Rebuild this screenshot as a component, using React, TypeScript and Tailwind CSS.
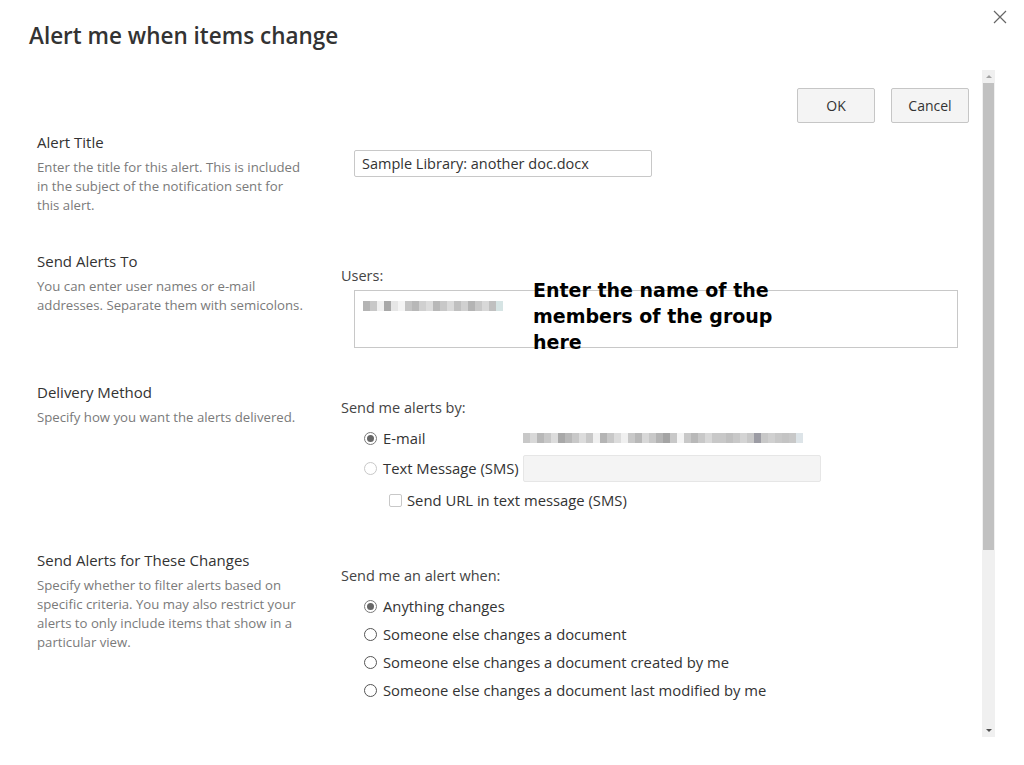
import React from "react";

const font = { fontFamily: '"Segoe UI", "Open Sans", "Liberation Sans", sans-serif' };

function Blur({ cells }: { cells: string[] }) {
  return (
    <div className="flex h-[10px] items-stretch blur-[0.5px]">
      {cells.map((c, i) => (
        <span key={i} className="w-[7px]" style={{ background: c }} />
      ))}
    </div>
  );
}

function Radio({ checked, disabled }: { checked?: boolean; disabled?: boolean }) {
  return (
    <span
      className={`flex h-[13px] w-[13px] shrink-0 items-center justify-center rounded-full border bg-white ${
        disabled ? "border-[#c8c8c8]" : checked ? "border-[#7a7a7a]" : "border-[#555]"
      }`}
    >
      {checked && <span className="h-[7px] w-[7px] rounded-full bg-[#666]" />}
    </span>
  );
}

function Section({
  title,
  desc,
  height,
  children,
}: {
  title: string;
  desc: React.ReactNode;
  height: string;
  children: React.ReactNode;
}) {
  return (
    <div className={`flex ${height}`}>
      <div className="w-[341px] shrink-0 pl-[37px] pr-[38px]">
        <div className="text-[15px] leading-[20px] text-[#333]">{title}</div>
        <div className="mt-[6px] text-[13.2px] leading-[19px] text-[#7a7a7a]">{desc}</div>
      </div>
      <div className="flex-1">{children}</div>
    </div>
  );
}

const userCells = [
  "#b4b4b4", "#c8c8c8", "#f0f0f0", "#a8a8a8", "#e6e6e6", "#f4f4f4", "#c4c4c4", "#b8b8b8", "#d0d0d0", "#dcdcdc",
  "#b8b8b8", "#c8c8c8", "#dadada", "#c0c0c0", "#d0d0d0", "#b4b4b4", "#c8c8c8", "#d8d8d8", "#c0c0c0", "#d6e4e4",
];
const mailCells = [
  "#c8c8c8", "#d8d8d8", "#b8b8b8", "#c8c8c8", "#dcdcdc", "#a8a8a8", "#b8b8b8", "#c8c8c8", "#dcdcdc", "#c8c8c8",
  "#f0f0f0", "#b4b4b4", "#c8c8c8", "#dcdcdc", "#f0f0f0", "#c8c8c8", "#b8b8b8", "#d8d8d8", "#c8c8c8", "#b4b4b4",
  "#a4a4a4", "#c8c8c8", "#f4f4f4", "#c8c8c8", "#b8b8b8", "#c8c8c8", "#d8d8d8", "#c8c8c8", "#c8c8c8", "#c0c0c0",
  "#c8c8c8", "#d4d4d4", "#c8c8c8", "#9c9ca4", "#c8c8c8", "#d0d0d0", "#c8c8c8", "#c4c4c4", "#c8c8c8", "#dde4e8",
];

export default function App() {
  return (
    <div className="relative flex h-[765px] w-[1024px] flex-col overflow-hidden bg-white" style={font}>
      {/* Header */}
      <div className="flex h-[70px] shrink-0 items-start justify-between">
        <h1 className="pl-[29px] pt-[21px] text-[22.5px] font-semibold leading-[30px] text-[#333]">
          Alert me when items change
        </h1>
        <button className="mr-[17px] mt-[10px] flex h-[14px] w-[14px] items-center justify-center">
          <svg width="14" height="14" viewBox="0 0 14 14" fill="none" stroke="#666" strokeWidth="1.2">
            <path d="M1 1l12 12M13 1L1 13" />
          </svg>
        </button>
      </div>

      {/* Scroll area */}
      <div className="flex h-[667px] shrink-0 pr-[29px]">
        <div className="flex-1">
          {/* Buttons */}
          <div className="mt-[18px] flex justify-end gap-[16px] pr-[13px]">
            <button className="h-[35px] w-[78px] rounded-[2px] border border-[#c6c6c6] bg-[#f4f4f4] text-[14px] text-[#333]">
              OK
            </button>
            <button className="h-[35px] w-[78px] rounded-[2px] border border-[#c6c6c6] bg-[#f4f4f4] text-[14px] text-[#333]">
              Cancel
            </button>
          </div>

          <div className="mt-[9px]">
            <Section
              title="Alert Title"
              height="h-[119px]"
              desc="Enter the title for this alert. This is included in the subject of the notification sent for this alert."
            >
              <div className="ml-[13px] mt-[18px] flex h-[27px] w-[298px] items-center rounded-[2px] border border-[#c8c8c8] px-[7px] text-[14.5px] text-[#333]">
                Sample Library: another doc.docx
              </div>
            </Section>

            <Section
              title="Send Alerts To"
              height="h-[131px]"
              desc="You can enter user names or e-mail addresses. Separate them with semicolons."
            >
              <div className="mt-[16px] text-[14.5px] leading-[18px] text-[#444]">Users:</div>
              <div className="relative ml-[13px] mt-[5px] h-[58px] w-[604px] border border-[#c8c8c8] px-[8px] pt-[10px]">
                <Blur cells={userCells} />
                <div
                  className="absolute left-[178px] top-[-14px] w-[290px] text-[19px] font-bold leading-[26px] text-black"
                  style={{ fontFamily: '"DejaVu Sans", Verdana, sans-serif' }}
                >
                  Enter the name of the members of the group here
                </div>
              </div>
            </Section>

            <Section title="Delivery Method" height="h-[168px]" desc="Specify how you want the alerts delivered.">
              <div className="mt-[17px] text-[14.5px] leading-[18px] text-[#444]">Send me alerts by:</div>
              <div className="mt-[6px] flex h-[30px] items-center pl-[23px] text-[14.8px] text-[#333]">
                <div className="flex w-[159px] items-center gap-[6px]">
                  <Radio checked />
                  <span>E-mail</span>
                </div>
                <div className="w-[283px]">
                  <Blur cells={mailCells} />
                </div>
              </div>
              <div className="flex h-[30px] items-center pl-[23px] text-[14.8px] text-[#333]">
                <div className="flex w-[159px] items-center gap-[6px] whitespace-nowrap">
                  <Radio disabled />
                  <span>Text Message (SMS)</span>
                </div>
                <div className="h-[27px] w-[298px] rounded-[2px] border border-[#e6e6e6] bg-[#f4f4f4]" />
              </div>
              <div className="mt-[5px] flex h-[24px] items-center gap-[5px] pl-[48px] text-[14.8px] text-[#333]">
                <span className="h-[13px] w-[13px] rounded-[2px] border border-[#c8c8c8] bg-white" />
                <span>Send URL in text message (SMS)</span>
              </div>
            </Section>

            <Section
              title="Send Alerts for These Changes"
              height="h-[200px]"
              desc="Specify whether to filter alerts based on specific criteria. You may also restrict your alerts to only include items that show in a particular view."
            >
              <div className="mt-[17px] text-[14.5px] leading-[18px] text-[#444]">Send me an alert when:</div>
              <div className="mt-[7px] flex flex-col pl-[23px] text-[14.8px] text-[#333]">
                {[
                  "Anything changes",
                  "Someone else changes a document",
                  "Someone else changes a document created by me",
                  "Someone else changes a document last modified by me",
                ].map((t, i) => (
                  <div key={t} className="flex h-[28px] items-center gap-[6px]">
                    <Radio checked={i === 0} />
                    <span>{t}</span>
                  </div>
                ))}
              </div>
            </Section>
          </div>
        </div>

        {/* Scrollbar */}
        <div className="flex w-[13px] shrink-0 flex-col bg-[#f0f0f0]">
          <div className="flex h-[13px] items-center justify-center">
            <span className="h-0 w-0 border-x-[3px] border-b-[3px] border-x-transparent border-b-[#a3a3a3]" />
          </div>
          <div className="mx-[1px] h-[467px] bg-[#c1c1c1]" />
          <div className="flex-1" />
          <div className="flex h-[13px] items-center justify-center">
            <span className="h-0 w-0 border-x-[3px] border-t-[3px] border-x-transparent border-t-[#505050]" />
          </div>
        </div>
      </div>
    </div>
  );
}
